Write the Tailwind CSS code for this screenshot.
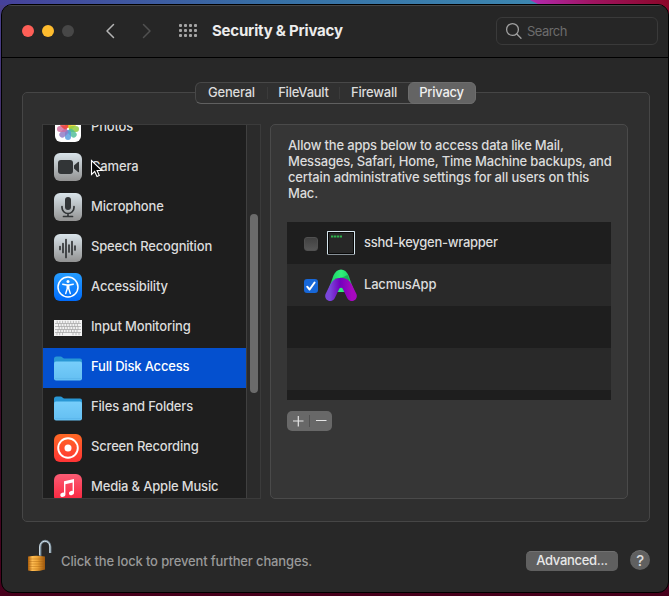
<!DOCTYPE html>
<html lang="en">
<head>
<meta charset="utf-8">
<title>Security &amp; Privacy</title>
<script src="https://cdn.jsdelivr.net/npm/@tailwindcss/browser@4"></script>
</head>
<body class="relative h-[596px] w-[669px] overflow-hidden bg-gradient-to-b from-[#4a4290] via-[#351030] to-[#48001c] pl-px pt-1 font-['Inter',sans-serif] text-[13px] font-medium leading-4 tracking-[-0.18px] text-[#dcdcdc]">
<svg class="absolute left-0 top-0" width="669" height="30" viewBox="0 0 669 30"><defs><linearGradient id="sky"><stop stop-color="#46419b"/><stop offset=".4" stop-color="#376fa5"/><stop offset=".8" stop-color="#3c86b0"/></linearGradient><linearGradient id="rose"><stop stop-color="#b32bb0"/><stop offset=".45" stop-color="#a01461"/><stop offset="1" stop-color="#8b0728"/></linearGradient></defs><path d="M0 0h669v5H0z" fill="url(#sky)"/><path d="M530 0h139v30h-80z" fill="url(#rose)"/></svg>

<div class="relative flex h-[589px] w-[668px] flex-col overflow-hidden rounded-[11px] border border-black bg-[#282828]">
  <header class="flex h-[53px] shrink-0 items-center border-b border-black border-t border-t-[#454545] bg-[#262626] pb-[2px] pl-5">
    <div class="flex gap-2"><i class="size-3 rounded-full bg-[#fe5f57]"></i><i class="size-3 rounded-full bg-[#febc2e]"></i><i class="size-3 rounded-full bg-[#474747]"></i></div>
    <svg class="ml-[31px]" width="10" height="16" viewBox="0 0 10 16" fill="none" stroke="#b4b4b4" stroke-width="1.5" stroke-linecap="round" stroke-linejoin="round"><path d="M8.5 1.5 2 8l6.500 6.500"/></svg>
    <svg class="ml-[27px]" width="10" height="16" viewBox="0 0 10 16" fill="none" stroke="#505050" stroke-width="1.500" stroke-linecap="round" stroke-linejoin="round"><path d="m1.500 1.500 6.500 6.500-6.500 6.500"/></svg>
    <div class="ml-[27px] grid grid-cols-4 gap-x-[2px] gap-y-[2px]">
      <i class="size-[3px] rounded-[1px] bg-[#a5a5a5]"></i><i class="size-[3px] rounded-[1px] bg-[#a5a5a5]"></i><i class="size-[3px] rounded-[1px] bg-[#a5a5a5]"></i><i class="size-[3px] rounded-[1px] bg-[#a5a5a5]"></i>
      <i class="size-[3px] rounded-[1px] bg-[#a5a5a5]"></i><i class="size-[3px] rounded-[1px] bg-[#a5a5a5]"></i><i class="size-[3px] rounded-[1px] bg-[#a5a5a5]"></i><i class="size-[3px] rounded-[1px] bg-[#a5a5a5]"></i>
      <i class="size-[3px] rounded-[1px] bg-[#a5a5a5]"></i><i class="size-[3px] rounded-[1px] bg-[#a5a5a5]"></i><i class="size-[3px] rounded-[1px] bg-[#a5a5a5]"></i><i class="size-[3px] rounded-[1px] bg-[#a5a5a5]"></i>
    </div>
    <h1 class="ml-[15px] w-[284px] whitespace-nowrap pt-px text-[15px] font-bold leading-5 tracking-[-0.2px] text-[#ececec]">Security &amp; Privacy</h1>
    <div class="flex h-7 w-[162px] items-center rounded-[6px] border border-[#3a3a3a] pl-2 text-[#6c6c6c]"><svg class="mr-[5px]" width="17" height="18" viewBox="0 0 17 18" fill="none" stroke="#a0a0a0" stroke-width="1.300" stroke-linecap="round"><circle cx="7.500" cy="7.500" r="5.900"/><path d="m11.800 12 4.200 4.300"/></svg><span class="pt-px font-normal tracking-[-0.55px]">Search</span></div>
  </header>

  <main class="relative ml-5 mt-[34px] flex h-[430px] w-[628px] shrink-0 rounded-[5px] border border-[#464646] bg-[#2f2f2f] pl-[19px] pt-[31px]">
    <nav class="absolute left-[172px] top-[-11px] flex h-[22px] w-[281px] items-center rounded-[6px] border border-[#484848] border-b-[#606060] bg-[#303030] text-center tracking-[-0.24px]">
      <span class="w-[71px] pb-[2px]">General</span><i class="h-3 w-px bg-[#3b3b3b]"></i><span class="w-[71px] pb-[2px]">FileVault</span><i class="h-3 w-px bg-[#3b3b3b]"></i><span class="w-[68px] pb-[2px]">Firewall</span><span class="-mr-px flex h-[22px] w-[68px] shrink-0 items-center justify-center rounded-[6px] border border-[#6d6d6d] bg-[#646464] pb-[2px] pr-px text-[#f0f0f0]">Privacy</span>
    </nav>

    <section class="flex h-[375px] w-[219px] shrink-0 border border-[#3b3b3b] bg-[#1e1e1e]">
      <div class="h-[373px] w-[203px] overflow-hidden whitespace-nowrap">
        <ul class="-mt-[17px]">
          <li class="flex h-10 items-center pl-[11px]"><svg class="mr-[9px] mt-px" width="28" height="28" viewBox="0 0 28 28"><rect x="1" y="1" width="26" height="26" rx="6" fill="#fff"/><g fill-opacity=".82"><rect x="11" y="3" width="6" height="10" rx="3" fill="#f59b23"/><rect x="11" y="3" width="6" height="10" rx="3" fill="#e6d328" transform="rotate(45 14 14)"/><rect x="11" y="3" width="6" height="10" rx="3" fill="#8fc93a" transform="rotate(90 14 14)"/><rect x="11" y="3" width="6" height="10" rx="3" fill="#4ebd97" transform="rotate(135 14 14)"/><rect x="11" y="3" width="6" height="10" rx="3" fill="#539bdd" transform="rotate(180 14 14)"/><rect x="11" y="3" width="6" height="10" rx="3" fill="#8d78c5" transform="rotate(225 14 14)"/><rect x="11" y="3" width="6" height="10" rx="3" fill="#cf6d9d" transform="rotate(270 14 14)"/><rect x="11" y="3" width="6" height="10" rx="3" fill="#ee3e38" transform="rotate(315 14 14)"/></g></svg><span class="-mt-[4px]">Photos</span></li>
          <li class="flex h-10 items-center pl-[11px]"><svg class="mr-[9px] -mt-[2px]" width="28" height="28" viewBox="0 0 28 28"><defs><linearGradient id="silver" x2="0" y2="1"><stop stop-color="#d9e4ea"/><stop offset="1" stop-color="#929292"/></linearGradient></defs><rect width="28" height="28" rx="6" fill="url(#silver)"/><rect x="4" y="7" width="15" height="14" rx="3" fill="#323537"/><path d="M20 12.500 24 9q1-.5 1 .6v9q0 1-1 .5l-4-3.500z" fill="#323537"/></svg><span class="-mt-[5px]">Camera</span></li>
          <li class="flex h-10 items-center pl-[11px]"><svg class="mr-[9px] -mt-[2px]" width="28" height="28" viewBox="0 0 28 28"><rect width="28" height="28" rx="6" fill="url(#silver)"/><rect x="11" y="4" width="6" height="13" rx="3" fill="#323537"/><path d="M8 13.500v1a6 6 0 0 0 12 0v-1M14 20.500v3M9.500 23.500h9" fill="none" stroke="#323537" stroke-width="1.700" stroke-linecap="round"/></svg><span class="-mt-[5px]">Microphone</span></li>
          <li class="flex h-10 items-center pl-[11px]"><svg class="mr-[9px]" width="28" height="28" viewBox="0 0 28 28"><rect width="28" height="28" rx="6" fill="url(#silver)"/><path d="M6 12.500v3M9 9.500v9M12 5.500v18M15 11v7M18 7.500v13M21 12v4" fill="none" stroke="#323537" stroke-width="1.700" stroke-linecap="round"/></svg><span class="-mt-[5px]">Speech Recognition</span></li>
          <li class="flex h-10 items-center pl-[11px]"><svg class="mr-[9px] -mt-[2px]" width="28" height="28" viewBox="0 0 28 28"><defs><linearGradient id="azure" x2="0" y2="1"><stop stop-color="#269dff"/><stop offset="1" stop-color="#006bfa"/></linearGradient></defs><rect width="28" height="28" rx="6" fill="url(#azure)"/><circle cx="14" cy="14" r="10" fill="none" stroke="#fff" stroke-width="1.500"/><circle cx="14" cy="8.500" r="1.500" fill="#fff"/><path d="m8.700 11.200 4 .8h2.600l4-.8M13.200 12v3.700l-1.500 4.800M14.800 12v3.700l1.500 4.800M14 12v3.500" fill="none" stroke="#fff" stroke-width="1.400" stroke-linecap="round" stroke-linejoin="round"/></svg><span class="-mt-[5px]">Accessibility</span></li>
          <li class="flex h-10 items-center pl-[11px]"><svg class="mr-[9px]" width="28" height="16" viewBox="0 0 28 16"><path fill="#f3f3f3" d="M0 0h28v16H0z"/><g stroke="#a2a2a2" stroke-width=".7"><path d="M1 3.500h26M1 6.500h26M1 9.500h26M1 12.500h26"/><path d="M3.200.8v2.500M5.900.8v2.500M8.600.8v2.500M11.300.8v2.500M14 .8v2.500M16.700.8v2.500M19.400.8v2.500M22.100.8v2.500M24.800.8v2.500M4.500 3.500v3M7.200 3.500v3M9.900 3.500v3M12.600 3.500v3M15.300 3.500v3M18 3.500v3M20.700 3.500v3M23.400 3.500v3M5.200 6.500v3M7.900 6.500v3M10.600 6.500v3M13.300 6.500v3M16 6.500v3M18.700 6.500v3M21.400 6.500v3M24 6.500v3M4 9.500v3M6.700 9.500v3M9.400 9.500v3M12.100 9.500v3M14.800 9.500v3M17.500 9.500v3M20.200 9.500v3M23 9.500v3M3 12.500v2.700M5.700 12.500v2.700M8.500 12.500v2.700M19 12.500v2.700M22 12.500v2.700M25 12.500v2.700"/></g></svg><span class="-mt-[5px]">Input Monitoring</span></li>
          <li class="flex h-10 items-center bg-[#0450cf] pl-[11px] text-white"><svg class="mr-[9px]" width="28" height="25" viewBox="0 0 28 25"><defs><linearGradient id="paper" x2="0" y2="1"><stop stop-color="#77cefb"/><stop offset="1" stop-color="#64bff2"/></linearGradient></defs><path d="M0 3Q0 .5 2.500.5h4q1 0 2 1t2 1H26q2 0 2 2V9H0z" fill="#2997d5"/><rect y="5.500" width="28" height="19" rx="2" fill="url(#paper)"/><path d="M1 22.500h26" stroke="#59b5e9" stroke-width=".7"/></svg><span class="-mt-[5px]">Full Disk Access</span></li>
          <li class="flex h-10 items-center pl-[11px]"><svg class="mr-[9px]" width="28" height="25" viewBox="0 0 28 25"><path d="M0 3Q0 .5 2.500.5h4q1 0 2 1t2 1H26q2 0 2 2V9H0z" fill="#2997d5"/><rect y="5.500" width="28" height="19" rx="2" fill="url(#paper)"/><path d="M1 22.500h26" stroke="#59b5e9" stroke-width=".7"/></svg><span class="-mt-[5px]">Files and Folders</span></li>
          <li class="flex h-10 items-center pl-[11px]"><svg class="mr-[9px]" width="28" height="28" viewBox="0 0 28 28"><defs><linearGradient id="coral" x2="0" y2="1"><stop stop-color="#ff6925"/><stop offset="1" stop-color="#ff3435"/></linearGradient></defs><rect width="28" height="28" rx="6" fill="url(#coral)"/><circle cx="14" cy="14" r="9.800" fill="none" stroke="#fff" stroke-width="1.900"/><circle cx="14" cy="14" r="3.500" fill="#fff"/></svg><span class="-mt-[5px]">Screen Recording</span></li>
          <li class="flex h-10 items-center pl-[11px]"><svg class="mr-[9px]" width="28" height="28" viewBox="0 0 28 28"><defs><linearGradient id="pink" x2="0" y2="1"><stop stop-color="#fb5c74"/><stop offset="1" stop-color="#fa233b"/></linearGradient></defs><rect width="28" height="28" rx="6" fill="url(#pink)"/><path d="M10.700 8v12.500M19.300 6v12.800" fill="none" stroke="#fff" stroke-width="1.400"/><path d="m10 7.200 10-2.200v3.200L10 10.400z" fill="#fff"/><ellipse cx="8.800" cy="20.800" rx="2.600" ry="2.100" fill="#fff" transform="rotate(-15 8.800 20.800)"/><ellipse cx="17.500" cy="19" rx="2.600" ry="2.100" fill="#fff" transform="rotate(-15 17.500 19)"/></svg><span class="-mt-[5px]">Media &amp; Apple Music</span></li>
        </ul>
      </div>
      <div class="w-[14px] border-l border-[#404040] bg-[#2b2b2b] pl-[3px] pt-[89px]"><div class="h-[179px] w-2 rounded-full bg-[#6b6b6b]"></div></div>
    </section>

    <section class="ml-[9px] h-[375px] w-[358px] shrink-0 rounded-[5px] border border-[#4a4a4a] bg-[#363636] pl-4 pt-3">
      <p class="ml-px h-[85px] whitespace-nowrap tracking-[-0.2px]"><span class="tracking-[-0.18px]">Allow the apps below to access data like Mail,</span><br>Messages, Safari, Home, Time Machine backups, and<br><span class="tracking-[-0.14px]">certain administrative settings for all users on this</span><br>Mac.</p>
      <div class="h-[178px] w-[324px] overflow-hidden bg-[#1e1e1e]">
        <div class="flex h-[42px] items-center pl-[17px]"><i class="mt-[2px] size-[14px] rounded-[3px] border border-[#505050] bg-gradient-to-b from-[#414141] to-[#565656]"></i><svg class="ml-[9px] mr-[9px]" width="28" height="24" viewBox="0 0 28 24"><path d="M.5.5h27v23H.5z" fill="#272727" stroke="#879097"/><path d="M.5 23V.5h27V23" fill="none" stroke="#d5e5ed"/><path d="M1.500 1.500h25v21h-25z" fill="none" stroke="#070707"/><path d="M4 5.500h11" stroke="#2fb14d" stroke-width="2.200" stroke-dasharray="2.300 .6"/></svg><span class="-mt-[3px] tracking-[-0.27px]">sshd-keygen-wrapper</span></div>
        <div class="flex h-[42px] items-center bg-[#292929] pl-[17px]"><i class="mt-[2px] flex size-[14px] items-center justify-center rounded-[3px] bg-[#1767d8]"><svg width="12" height="12" viewBox="0 0 12 12" fill="none" stroke="#fff" stroke-width="2" stroke-linecap="round" stroke-linejoin="round"><path d="m2.200 6.700 2.400 2.800 5-7"/></svg></i><svg class="ml-[7px] mr-[7px]" width="32" height="33" viewBox="0 0 32 33"><defs><linearGradient id="violet"><stop stop-color="#7a45da"/><stop offset=".45" stop-color="#7200bd"/><stop offset="1" stop-color="#a808c0"/></linearGradient><linearGradient id="mint"><stop stop-color="#12cc62"/><stop offset=".5" stop-color="#31ef7b"/><stop offset="1" stop-color="#11c35c"/></linearGradient></defs><path d="M2.500 23 8.500 6.500C11.500-1.500 20.500-1.500 23.500 6.500L29.500 23z" fill="url(#mint)"/><path d="M10 9.500q6 0 12.500-3.500l2 5.500-14 2z" fill="#087f43" opacity=".5"/><path d="M5.200 27 9.900 17.300C12.500 12.600 19.500 12.600 22.100 17.300L26.800 27" fill="none" stroke="url(#violet)" stroke-width="10" stroke-linecap="round"/></svg><span class="-mt-[3px]">LacmusApp</span></div>
        <div class="h-[42px]"></div><div class="h-[42px] bg-[#292929]"></div>
      </div>
      <div class="mt-[11px] flex h-5 w-[45px] items-center rounded-[5px] bg-[#686868]"><svg width="45" height="20" viewBox="0 0 45 20" fill="none" stroke="#e5e5e5"><path d="M6 10h10.500M11.300 5v10.500" stroke-width="1.200"/><path d="M22.500 4v12" stroke="#515151"/><path d="M29 9.500h10.500"/></svg></div>
    </section>
  </main>

  <footer class="flex h-[70px] items-center pl-[25px] pt-2">
    <svg class="-mt-3" width="25" height="33" viewBox="0 0 25 33"><defs><linearGradient id="brass"><stop stop-color="#a95b09"/><stop offset=".25" stop-color="#ffbd53"/><stop offset=".55" stop-color="#eda336"/><stop offset="1" stop-color="#9e570d"/></linearGradient></defs><path d="M13.200 17V8c0-8 10-8 10 0v6" fill="none" stroke="#718491" stroke-width="2.400"/><path d="M12.700 16V8c0-7 9.500-8 10.200-1v7" fill="none" stroke="#d9e7ef" stroke-width="1"/><path d="M1 17.500q8-1.500 17 0v13q-8 2.500-17 1z" fill="url(#brass)"/><path d="M1 20h17M1 22.500h17M1 25h17M1 27.500h17M1 30h17" stroke="#a7610e" stroke-width=".6" opacity=".65"/></svg>
    <span class="ml-[9px] w-[465px] whitespace-nowrap tracking-[-0.14px] text-[#999]">Click the lock to prevent further changes.</span>
    <button class="h-5 w-[92px] rounded-[5px] border-t border-[#707070] bg-[#606060] pb-[3px] tracking-[-0.3px] text-[#e8e8e8]">Advanced...</button>
    <button class="-mt-[2px] ml-3 size-5 rounded-full border-t border-[#707070] bg-[#606060] text-[15px] leading-[18px]">?</button>
  </footer>
</div>
<svg class="absolute left-[90px] top-[159px]" width="13" height="19" viewBox="0 0 13 19"><path d="M1.500 1.500v14l3.200-3 2.300 5 2.300-1-2.200-5H12z" fill="#080808" stroke="#fff" stroke-width="1.100"/></svg>
</body>
</html>
